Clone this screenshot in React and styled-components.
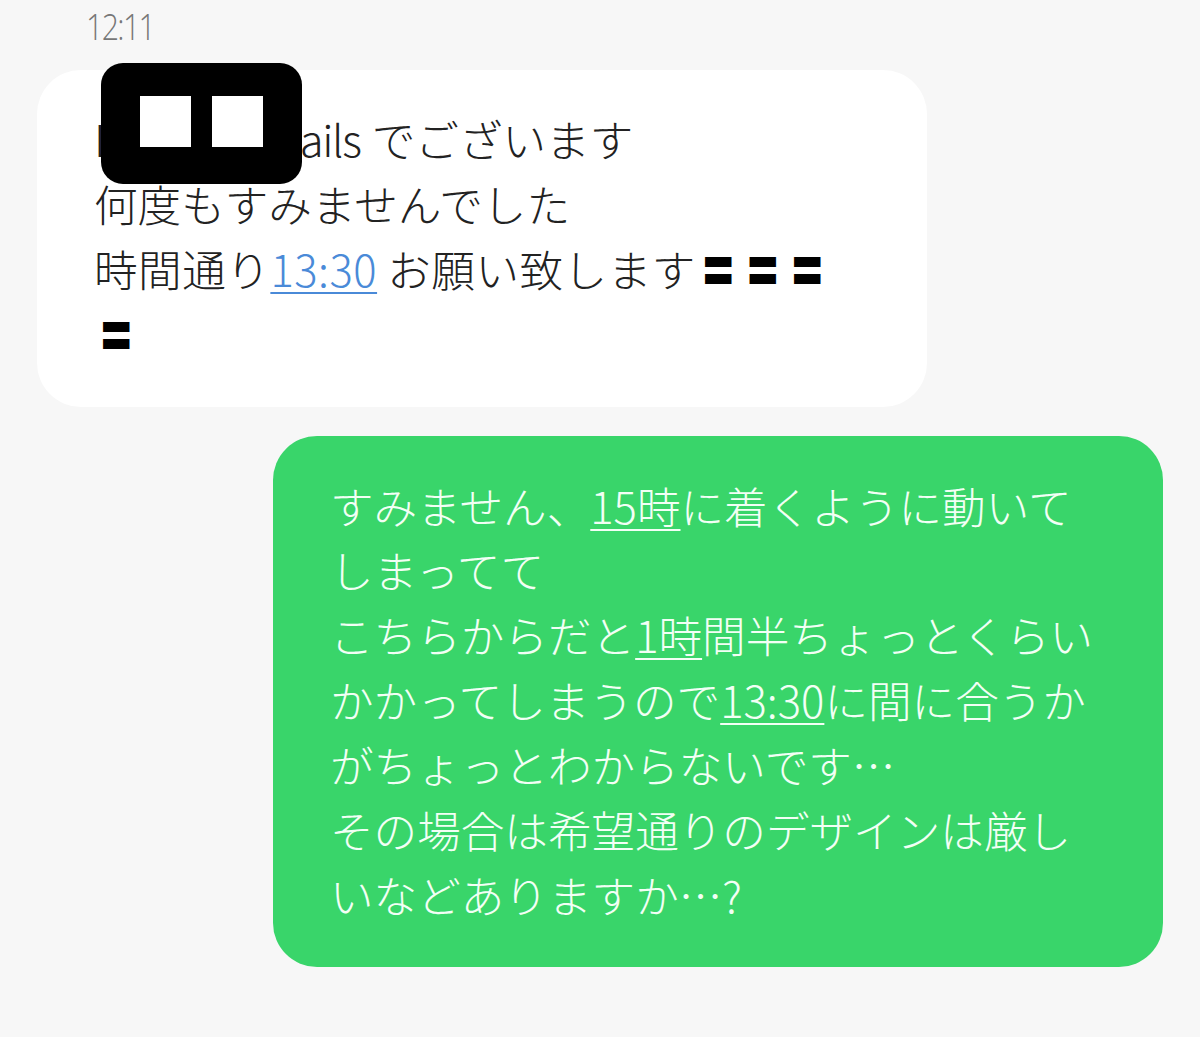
import React from "react";
import styled, { createGlobalStyle } from "styled-components";

const Global = createGlobalStyle`
  html, body { margin: 0; padding: 0; background: #f7f7f7; }
`;

const Page = styled.div`
  width: 1200px;
  height: 1037px;
  overflow: hidden;
  position: relative;
  background: #f7f7f7;
  display: flex;
  flex-direction: column;
  font-family: "Noto Sans CJK JP", "Noto Sans", sans-serif;
  font-weight: 300;
`;

const Time = styled.div`
  height: 70px;
  padding-left: 86px;
  box-sizing: border-box;
  font-family: "Open Sans", "Noto Sans", sans-serif;
  font-weight: 300;
  font-size: 37px;
  line-height: 52px;
  letter-spacing: -2px;
  color: #777;
  transform: scaleX(0.82);
  transform-origin: 86px 0;
`;

const Bubble = styled.div`
  box-sizing: border-box;
  width: 890px;
  padding: ${(p) => (p.$mine ? "37px 57px 40px" : "36px 57px 41px")};
  border-radius: 44px;
  font-size: 43.6px;
  line-height: ${(p) => (p.$mine ? "64.85px" : "64.9px")};
  background: ${(p) => (p.$mine ? "#39d56a" : "#ffffff")};
  color: ${(p) => (p.$mine ? "#f2fff5" : "#222")};
  margin-left: ${(p) => (p.$mine ? "273px" : "37px")};
  margin-top: ${(p) => (p.$mine ? "29px" : "0")};
`;

const Link = styled.span`
  text-decoration: underline;
  text-decoration-thickness: 2px;
  text-underline-offset: 5px;
  color: ${(p) => (p.$blue ? "#4a8ad8" : "inherit")};
`;

const Hidden = styled.span`
  display: inline-block;
  width: 183px;
`;

const Latin = styled.span`
  letter-spacing: -1.4px;
  word-spacing: 3px;
`;

const Spaced = styled.span`
  letter-spacing: 0.5px;
`;

const Mark = styled.span`
  display: inline-block;
  width: 44.6px;
  text-align: center;
  font-size: 33px;
  line-height: 1;
  font-weight: 700;
  letter-spacing: 0;
  color: #000;
  position: relative;
  top: -4px;
`;

const Redaction = styled.div`
  position: absolute;
  left: 101px;
  top: 63px;
  width: 201px;
  height: 121px;
  border-radius: 22px;
  background: #000;
  display: flex;
  align-items: center;
  justify-content: center;
  gap: 21px;
  padding-bottom: 5px;
  box-sizing: border-box;
`;

const Square = styled.div`
  width: 51px;
  height: 51px;
  background: #fff;
`;

export default function App() {
  return (
    <Page>
      <Global />
      <Time>12:11</Time>
      <Bubble>
        L<Hidden /><Latin>ails </Latin>でございます
        <br />
        何度もすみませんでした
        <br />
        <Spaced>
          時間通り<Link $blue>13:30</Link> お願い致します<Mark>〓</Mark><Mark>〓</Mark><Mark>〓</Mark>
        </Spaced>
        <br />
        <Mark>〓</Mark>
      </Bubble>
      <Bubble $mine>
        すみません、<Link>15時</Link>に着くように動いて
        <br />
        しまってて
        <br />
        こちらからだと<Link>1時</Link>間半ちょっとくらいかかってしまうので<Link>13:30</Link>に間に合うかがちょっとわからないです…
        <br />
        その場合は希望通りのデザインは厳しいなどありますか…?
      </Bubble>
      <Redaction>
        <Square />
        <Square />
      </Redaction>
    </Page>
  );
}
